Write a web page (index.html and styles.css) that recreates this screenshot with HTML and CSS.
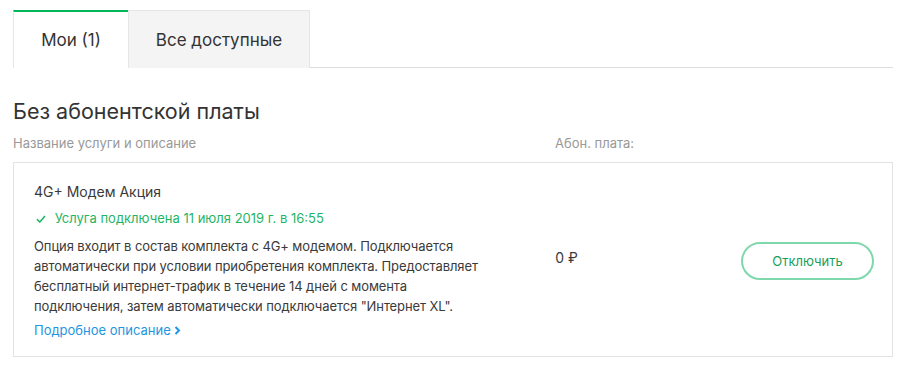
FILE: index.html
```html
<!DOCTYPE html>
<html lang="ru">
<head>
    <meta charset="UTF-8">
    <title>Мои услуги</title>
    <link rel="stylesheet" href="styles.css">
</head>
<body>
    <div class="services">
        <div class="tabs">
            <div class="tab tab-active">Мои (1)</div>
            <div class="tab">Все доступные</div>
        </div>

        <h2 class="group-title">Без абонентской платы</h2>

        <div class="table-head">
            <div class="col-name">Название услуги и описание</div>
            <div class="col-price">Абон. плата:</div>
        </div>

        <div class="service-card">
            <div class="col-name">
                <div class="service-title">4G+ Модем Акция</div>
                <div class="service-status">
                    <svg class="check" width="10" height="8" viewBox="0 0 10 8">
                        <path d="M1 4.2 L3.8 7 L9 1" fill="none" stroke="currentColor" stroke-width="1.6"/>
                    </svg>
                    Услуга подключена 11 июля 2019 г. в 16:55
                </div>
                <p class="service-desc">
                    Опция входит в состав комплекта с 4G+ модемом. Подключается автоматически при условии приобретения комплекта. Предоставляет бесплатный интернет-трафик в течение 14 дней с момента подключения, затем автоматически подключается "Интернет XL".
                </p>
                <a href="#" class="more-link">Подробное описание
                    <svg width="7" height="9" viewBox="0 0 7 9">
                        <path d="M1.5 1 L5 4.5 L1.5 8" fill="none" stroke="currentColor" stroke-width="2"/>
                    </svg>
                </a>
            </div>
            <div class="col-price service-price">0 ₽</div>
            <div class="col-action">
                <button class="off-btn">Отключить</button>
            </div>
        </div>
    </div>
</body>
</html>
```

FILE: styles.css
```css
* {
    margin: 0;
    padding: 0;
    box-sizing: border-box;
}

body {
    font-family: Inter, "Noto Sans", sans-serif;
    color: #3a3a3a;
    background: #fff;
    padding: 10px 16px 0 13px;
}

.services {
    width: 880px;
}

.tabs {
    display: flex;
    border-bottom: 1px solid #ddd;
    height: 58px;
}

.tab {
    display: flex;
    align-items: center;
    justify-content: center;
    font-size: 17px;
    color: #333;
    background: #f4f4f4;
    border: 1px solid #e6e6e6;
    border-bottom: none;
    width: 182px;
    height: 58px;
}

.tab-active {
    width: 115px;
    background: #fff;
    border-top: 2px solid #00b956;
    border-right: none;
    margin-bottom: -1px;
}

.group-title {
    font-size: 21.5px;
    font-weight: 400;
    line-height: 26px;
    margin-top: 30px;
    color: #333;
}

.table-head {
    display: flex;
    font-size: 13px;
    line-height: 16px;
    color: #999;
    margin-top: 11px;
}

.col-name {
    width: 522px;
}

.table-head .col-name {
    width: 542px;
}

.service-card {
    display: flex;
    align-items: center;
    border: 1px solid #e3e3e3;
    margin-top: 11px;
    padding: 19px 18px 16px 20px;
}

.service-title {
    font-size: 14px;
    line-height: 20px;
}

.service-status {
    font-size: 13px;
    line-height: 20px;
    color: #1fb565;
    margin-top: 6px;
}

.check {
    margin: 0 5px 0 2px;
}

.service-desc {
    font-size: 13px;
    line-height: 20px;
    letter-spacing: -0.1px;
    margin-top: 8px;
    width: 460px;
}

.more-link {
    display: inline-block;
    font-size: 13px;
    line-height: 20px;
    color: #1e96e0;
    text-decoration: none;
    margin-top: 4px;
}

.service-price {
    font-size: 14px;
    width: 186px;
    margin-top: -8px;
}

.col-action {
    margin-left: auto;
}

.off-btn {
    width: 133px;
    height: 38px;
    border: 2px solid #7fd8ac;
    border-radius: 19px;
    background: #fff;
    color: #1a9f5a;
    font-family: inherit;
    font-size: 13px;
    cursor: pointer;
}
```
